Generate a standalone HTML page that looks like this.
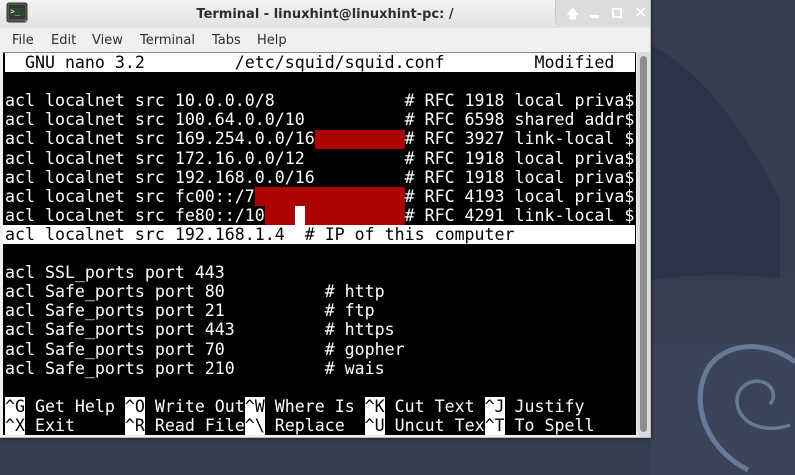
<!DOCTYPE html>
<html><head><meta charset="utf-8"><style>
*{margin:0;padding:0;box-sizing:border-box}
body{width:795px;height:475px;overflow:hidden;position:relative;background:#353e51;font-family:"DejaVu Sans","Liberation Sans",sans-serif}
#bg{position:absolute;left:0;top:0}
#win{position:absolute;left:0;top:0;width:651px;height:438px;background:#f1f0ef;border-right:1px solid #b9b9b9;border-bottom:1px solid #b9b9b9;box-shadow:1px 1px 3px rgba(0,0,0,.4)}
#title{position:absolute;left:0;top:0;width:650px;height:28px;background:linear-gradient(#f4f3f2,#e3e2e0);}
#title .t{position:absolute;left:0;width:650px;top:7px;text-align:center;font-size:13px;font-weight:bold;color:#2e2e2e}
#btns{position:absolute;left:555px;top:0;width:95px;height:26px;background:#dcdcdc;border-bottom-left-radius:6px;border-left:1px solid #c8c8c8;color:#fff;font-size:13px}
#menu{position:absolute;left:0;top:29px;height:24px;font-size:13px;color:#2e2e2e}
#menu span{position:absolute;top:4px;white-space:nowrap}
#term{position:absolute;left:3px;top:52px;width:633px;height:383px;background:#000;border-top:1px solid #888}
.l{position:absolute;left:5px;height:19.1px;line-height:19.1px;font-family:"DejaVu Sans Mono","Liberation Mono",monospace;font-size:16.6px;color:#fff;white-space:pre}
.inv{background:#fff;color:#000}
.box{position:absolute}
#sb{position:absolute;left:637px;top:52px;width:13px;height:385px;background:#dedddc}
#thumb{position:absolute;left:640px;top:56px;width:7px;height:376px;background:#8d8d8d;border-radius:4px}
</style></head><body>
<svg id="bg" width="795" height="475">
<rect width="795" height="475" fill="#353e51"/>
<path d="M650 45 Q720 120 780 260 L795 330 L795 0 L650 0Z" fill="#353e51"/>
<path d="M650 45 Q700 50 795 110 L795 0 L650 0Z" fill="#353e51"/>
<path d="M650 45 Q720 80 780 200 L780 280 L650 280Z" fill="#222b42" opacity=".55"/>
<path d="M650 280 Q720 270 795 280 L795 475 L650 475Z" fill="#3a4357" opacity=".6"/>
<path d="M650 345 Q720 340 795 345 L795 475 L650 475Z" fill="#3c4559" opacity=".5"/>
<path d="M795 362 C770 342 730 340 710 365 C690 395 700 445 748 470" fill="none" stroke="#667999" stroke-width="5"/>
<path d="M790 425 C770 432 745 428 738 408 C733 390 748 378 763 382 C774 386 776 398 770 404" fill="none" stroke="#667999" stroke-width="3.5"/>
</svg>
<div id="win">
<div id="title">
<svg style="position:absolute;left:6px;top:2px" width="22" height="22"><rect x="1" y="1" width="20" height="19" rx="2" fill="#555" stroke="#333"/><rect x="3" y="3" width="16" height="14" fill="#2b3b2b"/><path d="M4 7h14M4 10h14M4 13h14" stroke="#3f5a3f"/><text x="4" y="12" font-size="8" fill="#fff" font-family="DejaVu Sans Mono">&gt;_</text><circle cx="20" cy="19" r="1" fill="#7c5"/></svg>
<div class="t">Terminal - linuxhint@linuxhint-pc: /</div>
<div id="btns"><span style="position:absolute;left:10px;top:5px">&#129093;</span><span style="position:absolute;left:34px;top:15px;width:9px;height:3px;background:#fff"></span><span style="position:absolute;left:56px;top:8px;width:10px;height:10px;border:2px solid #fff"></span><span style="position:absolute;left:78px;top:3px;font-size:16px">&#10005;</span></div>
</div>
<div id="menu"><span style="left:12px">File</span><span style="left:51px">Edit</span><span style="left:92px">View</span><span style="left:140px">Terminal</span><span style="left:212px">Tabs</span><span style="left:257px">Help</span></div>
<div id="sb"></div><div id="thumb"></div>
<div id="term"></div>
</div>
<div class="box" style="left:5px;top:53px;width:630px;height:19px;background:#fff"></div>
<div class="box" style="left:315px;top:130px;width:90px;height:19px;background:#ad0000"></div>
<div class="box" style="left:255px;top:187px;width:150px;height:19px;background:#ad0000"></div>
<div class="box" style="left:265px;top:206px;width:140px;height:19px;background:#ad0000"></div>
<div class="box" style="left:295px;top:206px;width:10px;height:19px;background:#fff"></div>
<div class="box" style="left:3px;top:225px;width:632px;height:19px;background:#fff"></div>
<div class="l" style="top:53px;color:#000">  GNU nano 3.2         /etc/squid/squid.conf         Modified</div>
<div class="l" style="top:91.2px">acl localnet src 10.0.0.0/8             # RFC 1918 local priva$</div>
<div class="l" style="top:110.3px">acl localnet src 100.64.0.0/10          # RFC 6598 shared addr$</div>
<div class="l" style="top:129.4px">acl localnet src 169.254.0.0/16         # RFC 3927 link-local $</div>
<div class="l" style="top:148.5px">acl localnet src 172.16.0.0/12          # RFC 1918 local priva$</div>
<div class="l" style="top:167.6px">acl localnet src 192.168.0.0/16         # RFC 1918 local priva$</div>
<div class="l" style="top:186.7px">acl localnet src fc00::/7               # RFC 4193 local priva$</div>
<div class="l" style="top:205.8px">acl localnet src fe80::/10              # RFC 4291 link-local $</div>
<div class="l" style="top:224.9px;color:#000">acl localnet src 192.168.1.4  # IP of this computer</div>
<div class="l" style="top:263.1px">acl SSL_ports port 443</div>
<div class="l" style="top:282.2px">acl Safe_ports port 80          # http</div>
<div class="l" style="top:301.3px">acl Safe_ports port 21          # ftp</div>
<div class="l" style="top:320.4px">acl Safe_ports port 443         # https</div>
<div class="l" style="top:339.5px">acl Safe_ports port 70          # gopher</div>
<div class="l" style="top:358.6px">acl Safe_ports port 210         # wais</div>
<div class="l" style="top:396.8px"><span class="inv">^G</span> Get Help <span class="inv">^O</span> Write Out<span class="inv">^W</span> Where Is <span class="inv">^K</span> Cut Text <span class="inv">^J</span> Justify</div>
<div class="l" style="top:415.9px"><span class="inv">^X</span> Exit     <span class="inv">^R</span> Read File<span class="inv">^\</span> Replace  <span class="inv">^U</span> Uncut Tex<span class="inv">^T</span> To Spell</div>
</body></html>
